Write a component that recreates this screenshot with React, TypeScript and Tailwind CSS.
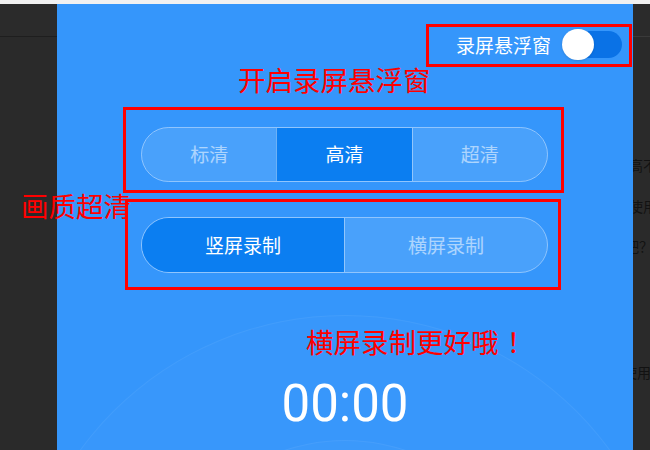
import type { ReactNode } from "react"

const cjk = { fontFamily: '"Noto Sans CJK SC", "Noto Sans", sans-serif' }

function Segmented({
  items,
  active,
  height,
}: {
  items: string[]
  active: number
  height: string
}) {
  return (
    <div
      className={`ml-[84px] flex w-[407px] overflow-hidden rounded-full border border-white/45 ${height}`}
    >
      {items.map((label, i) => (
        <div
          key={label}
          className={`flex flex-1 items-center justify-center text-[19px] ${
            i > 0 ? "border-l border-white/40" : ""
          } ${i === active ? "bg-[#0b7ef1] text-white" : "bg-white/10 text-white/55"}`}
        >
          {label}
        </div>
      ))}
    </div>
  )
}

function Note({ className, children }: { className: string; children: ReactNode }) {
  return (
    <div
      className={`pointer-events-none absolute whitespace-nowrap text-[27.5px] leading-none text-[#ff0000] ${className}`}
      style={cjk}
    >
      {children}
    </div>
  )
}

function Frame({ className }: { className: string }) {
  return <div className={`pointer-events-none absolute border-[3px] border-[#ff0000] ${className}`} />
}

export default function App() {
  return (
    <div className="relative h-[450px] w-[650px] overflow-hidden bg-[#f1f1f1]" style={cjk}>
      <div className="mt-[4px] flex h-[446px]">
        {/* left page edge */}
        <div className="w-[57px] bg-[#2a2a2a]">
          <div className="h-[33px] border-b border-[#1e1e1e] bg-[#2b2b2b]" />
        </div>

        {/* recorder panel */}
        <div className="relative flex w-[576px] flex-col overflow-hidden bg-[#3596fb]">
          <div className="absolute left-[-40px] top-[311px] h-[656px] w-[656px] rounded-full border border-white/5 bg-white/[0.015]" />
          <div className="absolute left-[98px] top-[436px] h-[380px] w-[380px] rounded-full border border-white/5 bg-white/[0.02]" />

          <div className="relative mt-[27px] flex items-center justify-end gap-[11px] pr-[11px]">
            <span className="text-[19px] leading-none text-white">录屏悬浮窗</span>
            <div className="relative h-[27px] w-[60px] rounded-full bg-[#0a72e6]">
              <div className="absolute left-0 top-[-2px] h-[31px] w-[32px] rounded-full bg-white shadow-sm" />
            </div>
          </div>

          <div className="relative mt-[69px]">
            <Segmented items={["标清", "高清", "超清"]} active={1} height="h-[55px]" />
          </div>
          <div className="relative mt-[35px]">
            <Segmented items={["竖屏录制", "横屏录制"]} active={0} height="h-[56px]" />
          </div>

          <div
            className="relative mt-[105px] text-center text-[51px] leading-none text-white"
            style={{ fontFamily: 'Roboto, "Noto Sans", sans-serif' }}
          >
            00:00
          </div>
        </div>

        {/* right page edge */}
        <div className="w-[17px] overflow-hidden bg-[#2a2a2a] text-[14px] leading-[14px] text-[#121212]">
          <div className="h-[33px] border-b border-[#3a3a3a] bg-[#2b2b2b]" />
          <div className="ml-[-4px] mt-[121px] whitespace-nowrap">高不</div>
          <div className="ml-[-4px] mt-[27px] whitespace-nowrap">使用</div>
          <div className="ml-[-8px] mt-[26px] whitespace-nowrap">吧？</div>
          <div className="ml-[-24px] mt-[112px] whitespace-nowrap">可使用</div>
        </div>
      </div>

      {/* annotations */}
      <Frame className="left-[426px] top-[24px] h-[43px] w-[206px]" />
      <Frame className="left-[123px] top-[107px] h-[86px] w-[441px]" />
      <Frame className="left-[125px] top-[199px] h-[91px] w-[436px]" />
      <Note className="left-[238px] top-[66px]">开启录屏悬浮窗</Note>
      <Note className="left-[21px] top-[192px]">画质超清</Note>
      <Note className="left-[306px] top-[328px]">
        横屏录制更好哦<span className="ml-[8px]">！</span>
      </Note>
    </div>
  )
}
